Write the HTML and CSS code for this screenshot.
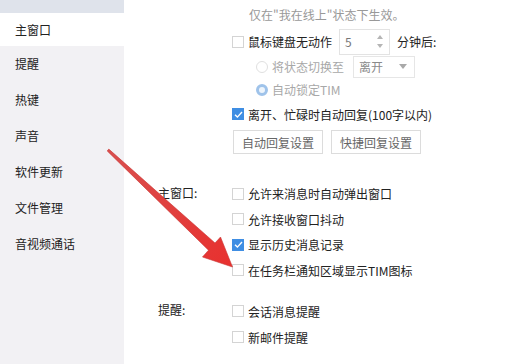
FILE: index.html
```html
<!DOCTYPE html>
<html lang="zh-CN">
<head>
<meta charset="utf-8">
<title>设置</title>
<link rel="stylesheet" href="styles.css">
</head>
<body>
<div class="app">
  <nav class="sidebar">
    <div class="sb-top"></div>
    <div class="sb-item sb-active">主窗口</div>
    <div class="sb-item">提醒</div>
    <div class="sb-item">热键</div>
    <div class="sb-item">声音</div>
    <div class="sb-item">软件更新</div>
    <div class="sb-item">文件管理</div>
    <div class="sb-item">音视频通话</div>
  </nav>
  <main class="content">
    <section class="top">
      <div class="hint">仅在"我在线上"状态下生效。</div>
      <div class="row row-idle">
        <span class="cb"></span><span class="lbl">鼠标键盘无动作</span>
        <span class="spin"><span class="spin-val">5</span><span class="spin-arrows"><i class="tri-up"></i><i class="tri-down"></i></span></span>
        <span class="lbl after">分钟后:</span>
      </div>
      <div class="row row-radio row-switch">
        <span class="radio"></span><span class="lbl dis">将状态切换至</span>
        <span class="select"><span class="select-val">离开</span><i class="tri-down dark"></i></span>
      </div>
      <div class="row row-radio row-lock">
        <span class="radio on"></span><span class="lbl dis">自动锁定TIM</span>
      </div>
      <div class="row row-reply">
        <span class="cb on"><svg viewBox="0 0 13 13" width="13" height="13"><path d="M3 6.8 L5.4 9.1 L10 4" fill="none" stroke="#fff" stroke-width="1.4"/></svg></span><span class="lbl">离开、忙碌时自动回复(100字以内)</span>
      </div>
      <div class="btns">
        <button class="btn">自动回复设置</button>
        <button class="btn">快捷回复设置</button>
      </div>
    </section>
    <section class="group group-main">
      <div class="glabel">主窗口:</div>
      <div class="glist">
        <div class="grow"><span class="cb"></span><span class="lbl">允许来消息时自动弹出窗口</span></div>
        <div class="grow"><span class="cb"></span><span class="lbl">允许接收窗口抖动</span></div>
        <div class="grow"><span class="cb on"><svg viewBox="0 0 13 13" width="13" height="13"><path d="M3 6.8 L5.4 9.1 L10 4" fill="none" stroke="#fff" stroke-width="1.4"/></svg></span><span class="lbl">显示历史消息记录</span></div>
        <div class="grow"><span class="cb"></span><span class="lbl">在任务栏通知区域显示TIM图标</span></div>
      </div>
    </section>
    <section class="group group-remind">
      <div class="glabel">提醒:</div>
      <div class="glist">
        <div class="grow grow-b"><span class="cb"></span><span class="lbl">会话消息提醒</span></div>
        <div class="grow grow-b"><span class="cb"></span><span class="lbl">新邮件提醒</span></div>
      </div>
    </section>
  </main>
  <svg class="arrow" width="520" height="364" viewBox="0 0 520 364">
    <defs>
      <linearGradient id="ag" x1="0" y1="0" x2="1" y2="1">
        <stop offset="0" stop-color="#d9504f"/>
        <stop offset="1" stop-color="#e8302e"/>
      </linearGradient>
    </defs>
    <polygon points="107.2,150.9 208.5,250.2 202.5,257 232.5,267 220.5,237 215,243 108.8,149.1" fill="url(#ag)" stroke="#c83634" stroke-width="0.6" stroke-linejoin="round"/>
  </svg>
</div>
</body>
</html>
```

FILE: styles.css
```css
* { box-sizing: border-box; }
html, body { margin: 0; padding: 0; }
body {
  width: 520px;
  height: 364px;
  overflow: hidden;
  background: #ffffff;
  font-family: "Noto Sans CJK SC", "Noto Sans", sans-serif;
  font-size: 12px;
  color: #222;
}
.app {
  position: relative;
  display: flex;
  width: 520px;
  height: 364px;
}
.sidebar {
  width: 124px;
  flex: none;
  background: #f2f1f4;
  display: flex;
  flex-direction: column;
}
.sb-top { height: 13px; background: #dfe3eb; }
.sb-item {
  height: 36px;
  line-height: 36px;
  padding-left: 15px;
  color: #222;
  font-size: 12px;
}
.sb-active {
  height: 33px;
  line-height: 33px;
  background: #ffffff;
}
.content {
  flex: 1;
  display: flex;
  flex-direction: column;
  padding-left: 34px;
}
.top {
  padding-left: 74px;
  display: flex;
  flex-direction: column;
}
.hint {
  margin-top: 4px;
  height: 24px;
  line-height: 22px;
  padding-left: 17px;
  color: #999;
}
.row {
  display: flex;
  align-items: center;
}
.row-idle { height: 27px; }
.row-switch { height: 23px; }
.row-lock { height: 23px; }
.row-reply { height: 26px; }
.row-radio { padding-left: 24px; }
.cb {
  width: 12px;
  height: 12px;
  border: 1px solid #d4d4d4;
  background: #fff;
  flex: none;
  display: inline-flex;
  align-items: center;
  justify-content: center;
  overflow: hidden;
}
.cb svg { flex: none; }
.cb.on { background: #3f8ee3; border-color: #3f8ee3; }
.lbl { margin-left: 4px; white-space: nowrap; }
.lbl.dis { color: #a8a8a8; }
.lbl.after { margin-left: 7px; }
.spin {
  margin-left: 7px;
  width: 51px;
  height: 26px;
  border: 1px solid #e3e3e3;
  display: flex;
  align-items: center;
  justify-content: space-between;
  padding: 0 6px 0 5px;
}
.spin-val { color: #777; }
.spin-arrows {
  display: flex;
  flex-direction: column;
  gap: 5px;
}
.tri-up, .tri-down {
  display: block;
  width: 0;
  height: 0;
  border-left: 3.5px solid transparent;
  border-right: 3.5px solid transparent;
}
.tri-up { border-bottom: 4px solid #b5b5b5; }
.tri-down { border-top: 4px solid #b5b5b5; }
.tri-down.dark { border-top-color: #a9a9a9; border-left-width: 4px; border-right-width: 4px; border-top-width: 5px; }
.radio {
  width: 12px;
  height: 12px;
  border-radius: 50%;
  border: 1px solid #e0e0e0;
  background: #fff;
  flex: none;
}
.radio.on {
  border: 3px solid #9fc3ea;
  background: #eef5fc;
}
.select {
  margin-left: 9px;
  width: 62px;
  height: 22px;
  border: 1px solid #e6e6e6;
  display: flex;
  align-items: center;
  justify-content: space-between;
  padding: 0 7px 0 5px;
}
.select-val { color: #8a8a8a; }
.btns {
  margin-top: 3px;
  display: flex;
  gap: 8px;
  padding-left: 1px;
}
.btn {
  width: 90px;
  height: 24px;
  border: 1px solid #dcdcdc;
  background: #fff;
  color: #666;
  font-family: inherit;
  font-size: 12px;
  padding: 0;
  margin: 0;
}
.group {
  display: flex;
}
.group-main { margin-top: 27px; }
.group-remind { margin-top: 15px; }
.glabel {
  width: 74px;
  flex: none;
  height: 24px;
  line-height: 24px;
  color: #222;
}
.glist { display: flex; flex-direction: column; }
.grow {
  display: flex;
  align-items: center;
  height: 25.5px;
}
.grow-b { height: 26px; }
.arrow {
  position: absolute;
  left: 0;
  top: 0;
  pointer-events: none;
}
```
